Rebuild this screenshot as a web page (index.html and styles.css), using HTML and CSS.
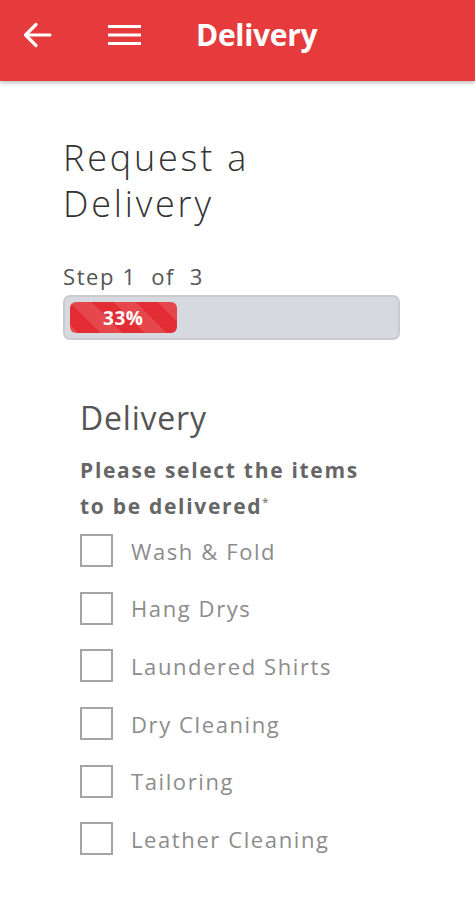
FILE: index.html
```html
<!DOCTYPE html>
<html lang="en">
<head>
<meta charset="utf-8">
<title>Delivery</title>
<link rel="stylesheet" href="styles.css">
</head>
<body>
<header class="topbar">
  <span class="icon back">
    <svg width="30" height="26" viewBox="0 0 30 26"><path d="M28 13H4M14 2.5L3.5 13L14 23.5" fill="none" stroke="#fff" stroke-width="3.2" stroke-linecap="round" stroke-linejoin="round"/></svg>
  </span>
  <span class="icon menu">
    <svg width="33" height="22" viewBox="0 0 33 22"><path d="M0 2.5H33M0 11H33M0 19.5H33" stroke="#fff" stroke-width="3.2"/></svg>
  </span>
  <h1 class="topbar-title">Delivery</h1>
</header>
<main class="content">
  <h2 class="page-title">Request a<br>Delivery</h2>
  <div class="step">Step 1&nbsp; of&nbsp; 3</div>
  <div class="progress">
    <div class="progress-fill" style="width:33%">33%</div>
  </div>
  <section class="form">
    <h3 class="form-title">Delivery</h3>
    <p class="question required">Please select the items to be delivered</p>
    <ul class="options">
      <li class="option"><span class="box"></span>Wash &amp; Fold</li>
      <li class="option"><span class="box"></span>Hang Drys</li>
      <li class="option"><span class="box"></span>Laundered Shirts</li>
      <li class="option"><span class="box"></span>Dry Cleaning</li>
      <li class="option"><span class="box"></span>Tailoring</li>
      <li class="option"><span class="box"></span>Leather Cleaning</li>
    </ul>
  </section>
</main>
</body>
</html>
```
FILE: styles.css
```css
* { box-sizing: border-box; }
html, body { margin: 0; padding: 0; background: #fff; }
body { font-family: "Open Sans", "Noto Sans", sans-serif; }

.topbar {
  height: 81px;
  background: #e53b3c;
  display: flex;
  align-items: center;
  box-shadow: 0 2px 4px rgba(0,0,0,0.25);
  padding: 0 0 12px 22px;
}
.icon { display: flex; align-items: center; }
.back { width: 86px; }
.menu { width: 88px; }
.topbar-title {
  margin: 0;
  color: #fff;
  font-size: 30px;
  font-weight: 700;
  letter-spacing: -0.3px;
  line-height: 36px;
}

.content { padding: 54px 0 0 63px; width: 410px; }
.page-title {
  margin: 0;
  font-size: 36px;
  font-weight: 300;
  line-height: 46px;
  color: #333;
  letter-spacing: 2.8px;
}
.step {
  margin-top: 36px;
  font-size: 22px;
  color: #555;
  line-height: 26px;
  letter-spacing: 1.6px;
}
.progress {
  margin-top: 6px;
  width: 337px;
  height: 45px;
  background: #d6d9dd;
  border: 2px solid #c9cbcf;
  border-radius: 7px;
  padding: 5px;
}
.progress-fill {
  height: 31px;
  background-color: #e32d34;
  background-image: linear-gradient(45deg, rgba(255,255,255,.12) 25%, transparent 25%, transparent 50%, rgba(255,255,255,.12) 50%, rgba(255,255,255,.12) 75%, transparent 75%, transparent);
  background-size: 44px 44px;
  border-radius: 6px;
  color: #fff;
  font-weight: 700;
  font-size: 19px;
  letter-spacing: 0.5px;
  display: flex;
  align-items: center;
  justify-content: center;
}

.form { padding-left: 17px; margin-top: 58px; }
.form-title {
  margin: 0;
  font-size: 32px;
  font-weight: 400;
  color: #555;
  line-height: 40px;
  letter-spacing: 0.8px;
}
.question {
  margin: 14px 0 0;
  font-size: 21px;
  font-weight: 700;
  color: #666;
  line-height: 36px;
  width: 300px;
  letter-spacing: 1.7px;
}
.required::after {
  content: "*";
  font-size: 11px;
  vertical-align: 8px;
  line-height: 11px;
  letter-spacing: 0;
  color: #888;
}
.options { list-style: none; margin: -2px 0 0; padding: 0; }
.option {
  display: flex;
  align-items: center;
  height: 57.6px;
  font-size: 22px;
  color: #8c8c8c;
  letter-spacing: 1.6px;
}
.box {
  width: 33px;
  height: 33px;
  border: 2px solid #a5a5a5;
  margin-right: 18px;
  flex: none;
}
```
